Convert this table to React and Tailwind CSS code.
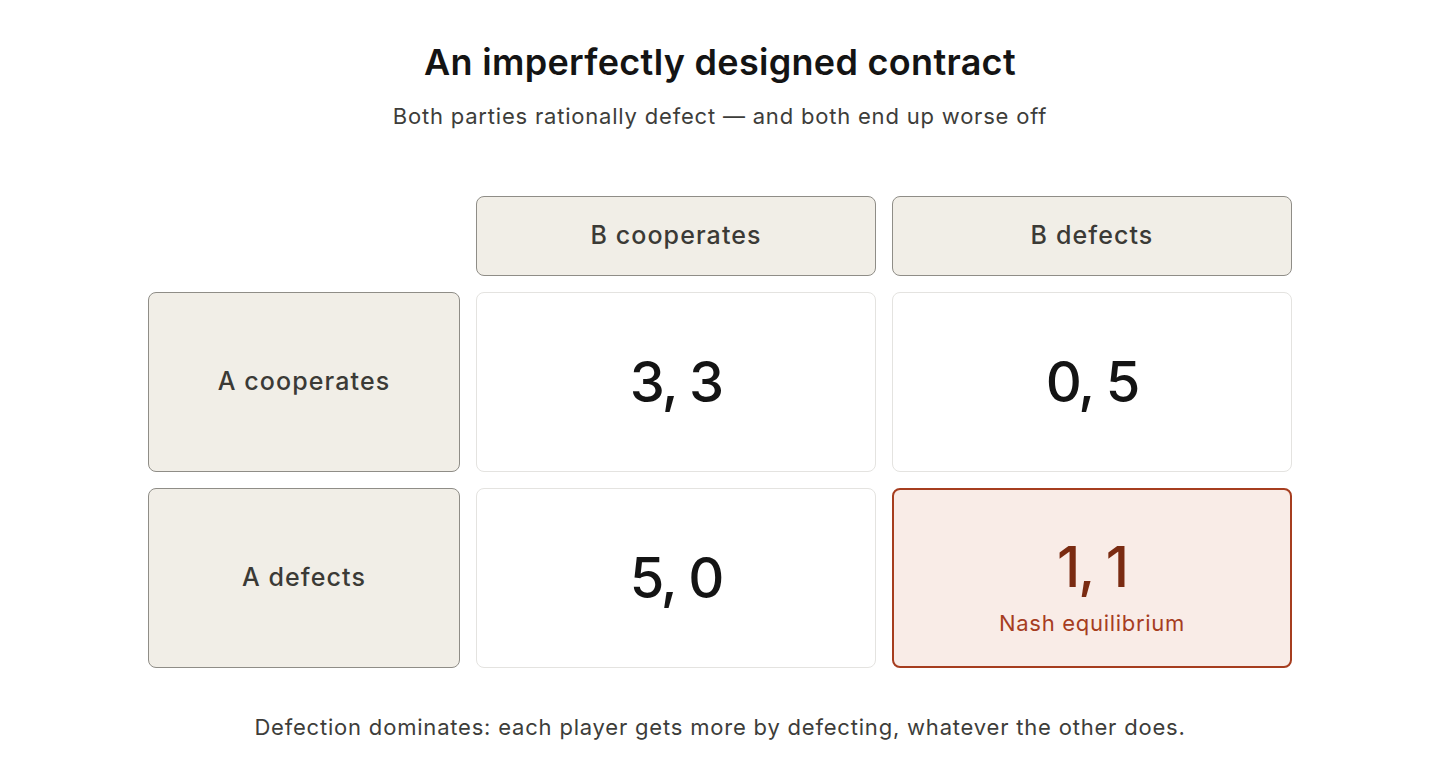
const font = { fontFamily: 'Inter, "Noto Sans", sans-serif' }

function Label({ children }) {
  return (
    <div className="flex items-center justify-center rounded-lg border border-[#8f8d87] bg-[#f1eee7] text-[25px] font-medium tracking-[1.1px] text-[#3b3a36]">
      {children}
    </div>
  )
}

function Payoff({ value }) {
  return (
    <div className="flex items-center justify-center rounded-lg border border-[#e4e3e0] bg-white text-[56px] font-medium tracking-[-2px] text-[#141414]">
      {value}
    </div>
  )
}

export default function App() {
  return (
    <div className="min-h-[780px] bg-white pt-[40px] text-center" style={font}>
      <h1 className="text-[36px] font-semibold leading-[44px] tracking-[0.3px] text-[#141414]">
        An imperfectly designed contract
      </h1>
      <p className="mt-[18px] text-[22px] leading-[28px] tracking-[0.8px] text-[#3d3d3a]">
        Both parties rationally defect — and both end up worse off
      </p>

      <div className="mx-auto mt-[66px] grid w-[1144px] grid-cols-[312px_400px_400px] grid-rows-[80px_180px_180px] gap-4">
        <div />
        <Label>B cooperates</Label>
        <Label>B defects</Label>

        <Label>A cooperates</Label>
        <Payoff value="3, 3" />
        <Payoff value="0, 5" />

        <Label>A defects</Label>
        <Payoff value="5, 0" />
        <div className="flex flex-col items-center justify-center rounded-lg border-2 border-[#a63d1f] bg-[#f9ece7] pt-[16px]">
          <span className="text-[56px] font-medium leading-[64px] tracking-[-2px] text-[#7a2b12]">1, 1</span>
          <span className="mt-[10px] text-[22px] leading-[28px] tracking-[0.7px] text-[#a63d1f]">Nash equilibrium</span>
        </div>
      </div>

      <p className="mt-[45px] text-[22px] leading-[28px] tracking-[0.8px] text-[#3d3d3a]">
        Defection dominates: each player gets more by defecting, whatever the other does.
      </p>
    </div>
  )
}
